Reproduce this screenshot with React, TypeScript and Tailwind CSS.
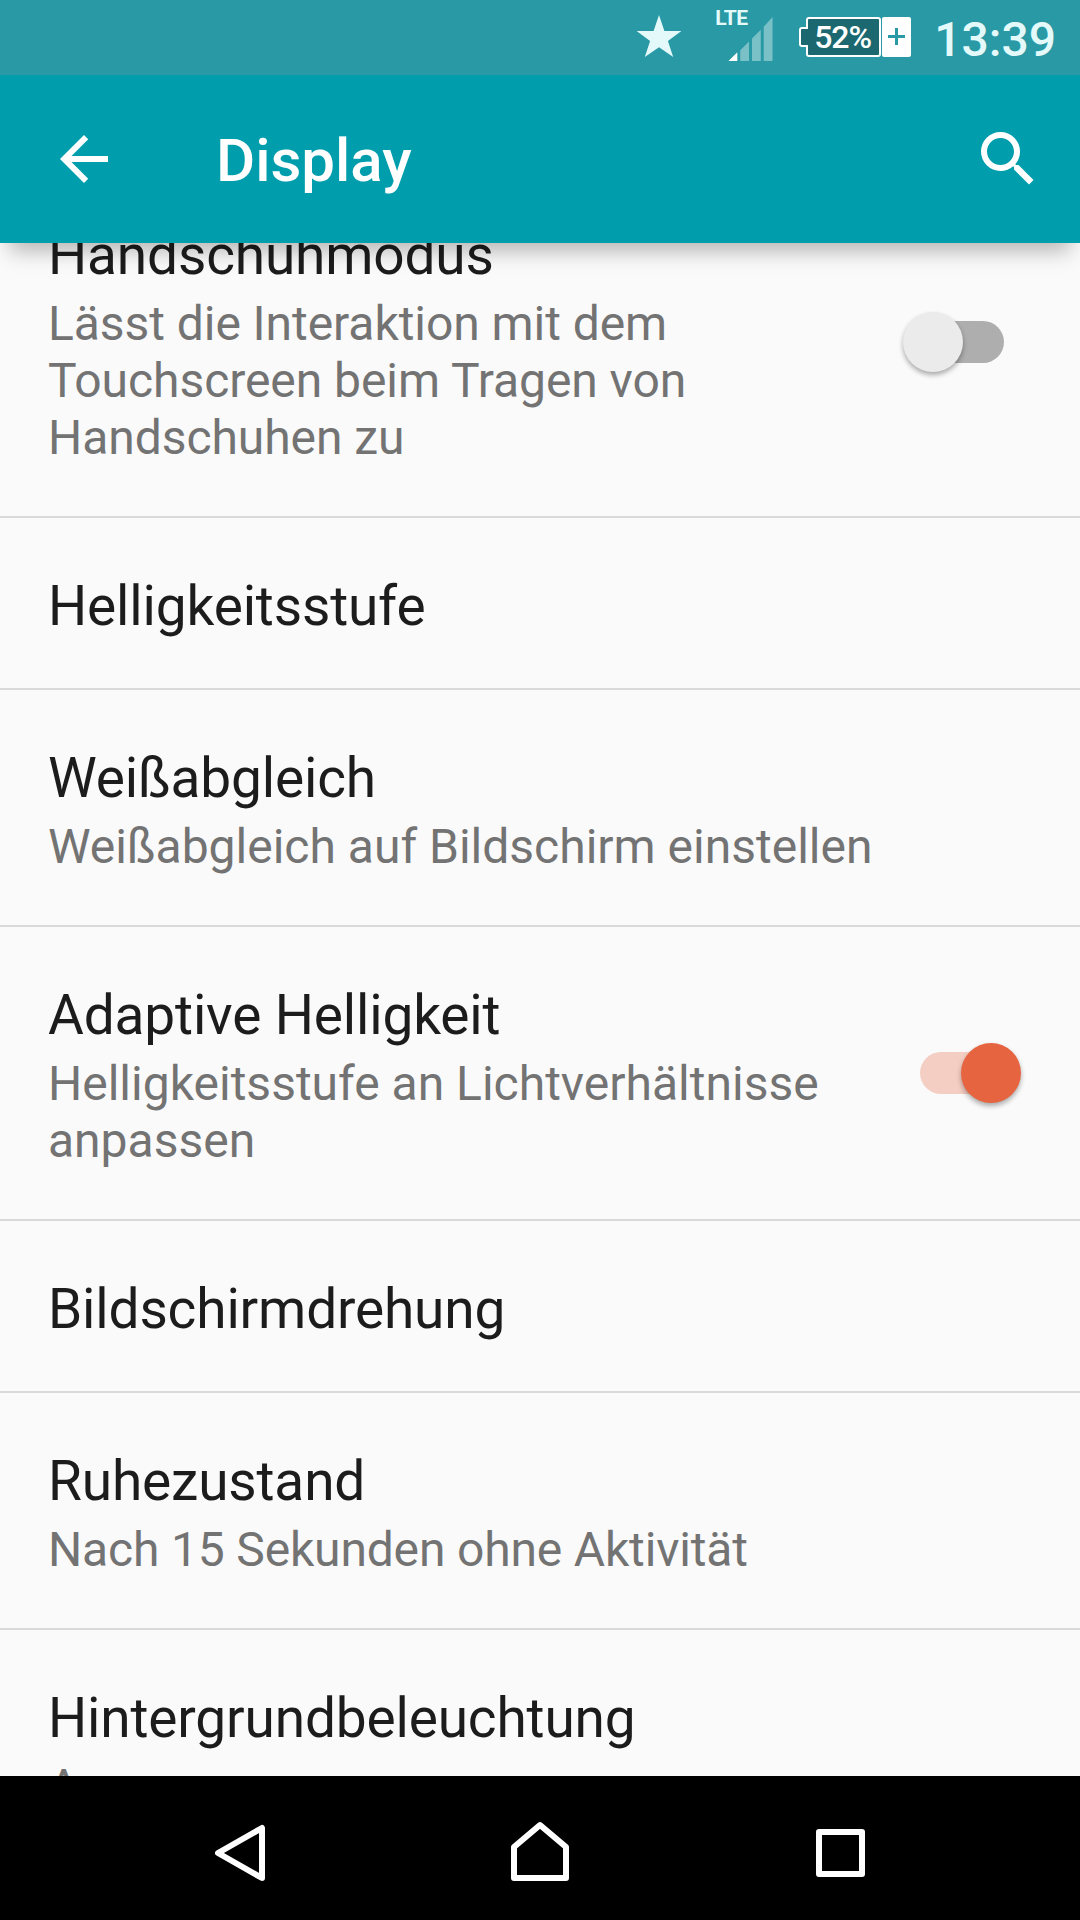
import { useState } from "react";

type Setting = {
  id: string;
  title: string;
  summary?: string;
  summaryClass?: string;
  toggle?: boolean;
};

const settings: Setting[] = [
  {
    id: "glove",
    title: "Handschuhmodus",
    summary: "Lässt die Interaktion mit dem Touchscreen beim Tragen von Handschuhen zu",
    summaryClass: "tracking-[-0.06px]",
    toggle: true,
  },
  { id: "brightness", title: "Helligkeitsstufe" },
  {
    id: "white-balance",
    title: "Weißabgleich",
    summary: "Weißabgleich auf Bildschirm einstellen",
  },
  {
    id: "adaptive",
    title: "Adaptive Helligkeit",
    summary: "Helligkeitsstufe an Lichtverhältnisse anpassen",
    toggle: true,
  },
  { id: "rotation", title: "Bildschirmdrehung" },
  {
    id: "sleep",
    title: "Ruhezustand",
    summary: "Nach 15 Sekunden ohne Aktivität",
    summaryClass: "tracking-[-0.17px]",
  },
  { id: "backlight", title: "Hintergrundbeleuchtung", summary: "Aus" },
];

export default function App() {
  const [enabled, setEnabled] = useState<Record<string, boolean>>({
    glove: false,
    adaptive: true,
  });

  const handleToggle = (id: string) => {
    setEnabled((prev) => ({ ...prev, [id]: !prev[id] }));
  };

  return (
    <div className="flex h-[1920px] w-[1080px] flex-col overflow-hidden bg-[#fafafa] font-['Roboto',sans-serif]">
      <StatusBar />

      {/* App bar */}
      <header className="relative z-10 flex h-[168px] shrink-0 items-center bg-[#009ead] pr-9 pl-12 text-white shadow-[0_18px_20px_-10px_rgba(0,0,0,0.28)]">
        <button aria-label="Zurück">
          <BackIcon />
        </button>
        <h1 className="ml-24 flex-1 pt-[3px] text-[60px] leading-[70px] font-medium">Display</h1>
        <button aria-label="Suchen">
          <SearchIcon />
        </button>
      </header>

      {/* Settings list, scrolled a little so the first row sits under the bar */}
      <main className="min-h-0 flex-1 overflow-hidden">
        <ul className="-mt-[76px]">
          {settings.map((item) => (
            <li
              key={item.id}
              className="flex items-center border-b-2 border-[#d9d9d9] pr-[58px] pl-12"
            >
              <div className="w-[832px] pt-14 pb-[49px]">
                <h2 className="text-[55px] leading-[65px] tracking-[-0.16px] text-[#1c1c1c]">
                  {item.title}
                </h2>
                {item.summary && (
                  <p
                    className={`mt-[7px] mb-px text-[48px] leading-[57px] text-[#737373] ${item.summaryClass ?? ""}`}
                  >
                    {item.summary}
                  </p>
                )}
              </div>
              {item.toggle && (
                <Toggle on={enabled[item.id]} onChange={() => handleToggle(item.id)} />
              )}
            </li>
          ))}
        </ul>
      </main>

      <NavBar />
    </div>
  );
}

function StatusBar() {
  return (
    <div className="flex h-[75px] shrink-0 items-start justify-end bg-[#2899a5] pr-6 text-[#e4f9fa]">
      <svg className="mt-[15px]" width="46" height="42" viewBox="0 0 46 42" fill="currentColor">
        <path d="M23 0l5.4 15.9H45.4L31.9 25.9 37.2 42 23 32.3 8.8 42l5.3-16.1L.6 15.9h17z" />
      </svg>

      {/* Signal */}
      <div className="ml-[33px] flex h-[62px] w-[59px] flex-col pt-[9px]">
        <span className="text-[21px] leading-[18px] font-bold tracking-[-0.5px]">LTE</span>
        <svg className="-mt-[10px] ml-[13px]" width="46" height="46" viewBox="0 0 46 46">
          <path d="M0 45l9-9v9z" fill="#fff" />
          <path
            d="M12 45V34l9-9v20zM24 45V22l9-9v32zM36 45V10l9-10v45z"
            fill="#79c0c7"
          />
        </svg>
      </div>

      {/* Battery */}
      <div className="mt-[17px] ml-[25px] flex items-center">
        <div className="relative">
          <svg width="82" height="40" viewBox="0 0 82 40">
            <path
              d="M9 1h70q2 0 2 2v34q0 2-2 2H10q-2 0-2-2v-8H3q-2 0-2-2V13q0-2 2-2h5V3q0-2 2-2z"
              fill="#1b6870"
              stroke="#fff"
              strokeWidth="2"
            />
          </svg>
          <span className="absolute top-0 left-[15px] text-[32px] leading-[41px] font-medium tracking-[-1.1px] text-white">
            52%
          </span>
        </div>
        <svg className="ml-[1px]" width="29" height="40" viewBox="0 0 29 40">
          <rect width="29" height="40" rx="2" fill="#fff" />
          <path d="M6 19.5h17M14.500 11v17" stroke="#2899a5" strokeWidth="3" />
        </svg>
      </div>

      <span className="mt-3 ml-[23px] text-[48px] leading-[56px] font-medium">13:39</span>
    </div>
  );
}

function Toggle({ on, onChange }: { on: boolean; onChange: () => void }) {
  return (
    <button
      role="switch"
      aria-checked={on}
      onClick={onChange}
      className="ml-auto flex h-[60px] w-[120px] shrink-0 items-center justify-center"
    >
      <span
        className={`flex h-[42px] w-[84px] items-center rounded-full ${
          on ? "justify-end bg-[#f5cec3]" : "justify-start bg-[#aeaeae]"
        }`}
      >
        <span
          className={`size-[60px] shrink-0 rounded-full shadow-[0_3px_5px_rgba(0,0,0,0.32)] ${
            on ? "-mr-[17px] bg-[#e66540]" : "-ml-[17px] bg-[#ebebeb]"
          }`}
        />
      </span>
    </button>
  );
}

function NavBar() {
  return (
    <nav className="flex h-36 shrink-0 items-center justify-center gap-[200px] bg-black">
      <button aria-label="Zurück">
        <svg width="100" height="144" viewBox="190 1776 100 144" fill="none" stroke="#fff" strokeWidth="6" strokeLinejoin="round">
          <path d="M262 1828v50l-44-25z" />
        </svg>
      </button>
      <button aria-label="Startseite">
        <svg width="100" height="144" viewBox="490 1776 100 144" fill="none" stroke="#fff" strokeWidth="6" strokeLinejoin="round">
          <path d="M514 1878v-31l26-22 26 22v31z" />
        </svg>
      </button>
      <button aria-label="Übersicht">
        <svg width="100" height="144" viewBox="790 1776 100 144" fill="none" stroke="#fff" strokeWidth="6" strokeLinejoin="round">
          <path d="M819 1832h43v42h-43z" />
        </svg>
      </button>
    </nav>
  );
}

function BackIcon() {
  return (
    <svg width="72" height="72" viewBox="0 0 24 24" fill="currentColor">
      <path d="M20 11H7.830l5.590-5.590L12 4l-8 8 8 8 1.410-1.410L7.830 13H20v-2z" />
    </svg>
  );
}

function SearchIcon() {
  return (
    <svg width="72" height="72" viewBox="0 0 24 24" fill="currentColor">
      <path d="M15.500 14h-.79l-.28-.27A6.471 6.471 0 0 0 16 9.500 6.500 6.500 0 1 0 9.500 16c1.610 0 3.090-.59 4.230-1.570l.27.28v.79l5 4.990L20.490 19l-4.990-5zm-6 0C7.010 14 5 11.990 5 9.500S7.010 5 9.500 5 14 7.010 14 9.500 11.990 14 9.500 14z" />
    </svg>
  );
}
